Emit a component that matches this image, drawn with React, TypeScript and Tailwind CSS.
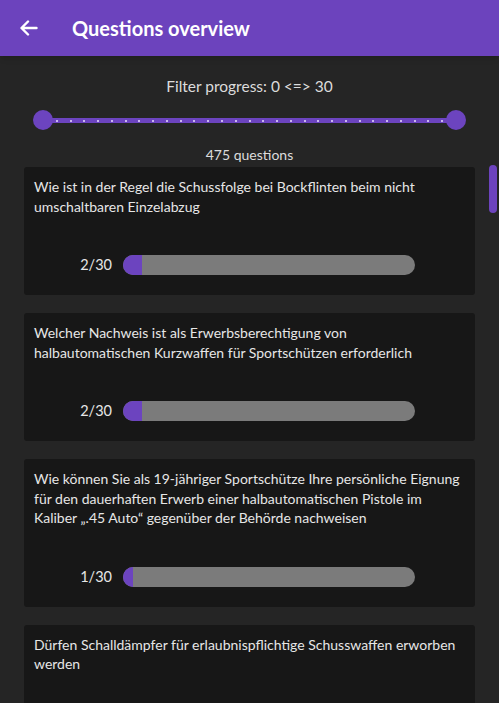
import React from "react";

const questions = [
  {
    text: "Wie ist in der Regel die Schussfolge bei Bockflinten beim nicht umschaltbaren Einzelabzug",
    done: 2,
  },
  {
    text: "Welcher Nachweis ist als Erwerbsberechtigung von halbautomatischen Kurzwaffen für Sportschützen erforderlich",
    done: 2,
  },
  {
    text: "Wie können Sie als 19-jähriger Sportschütze Ihre persönliche Eignung für den dauerhaften Erwerb einer halbautomatischen Pistole im Kaliber „.45 Auto“ gegenüber der Behörde nachweisen",
    done: 1,
  },
  {
    text: "Dürfen Schalldämpfer für erlaubnispflichtige Schusswaffen erworben werden",
    done: 0,
  },
];

const TOTAL = 30;

const RangeSlider = () => {
  const ticks = Array.from({ length: TOTAL - 1 }, (_, i) => i + 1);
  return (
    <div className="relative mx-[33px] h-5">
      {/* track */}
      <div className="absolute left-[10px] right-[10px] top-[8px] h-[5px] bg-[#6c44bf]" />
      {/* ticks */}
      {ticks.map((t) => (
        <div
          key={t}
          className="absolute top-[9.5px] h-[2px] w-[2px] bg-[#c9b6ee]"
          style={{ left: `calc(10px + (100% - 20px) * ${t / TOTAL} - 1px)` }}
        />
      ))}
      <div className="absolute left-0 top-0 h-5 w-5 rounded-full bg-[#6c44bf]" />
      <div className="absolute right-0 top-0 h-5 w-5 rounded-full bg-[#6c44bf]" />
    </div>
  );
};

const QuestionCard = ({ text, done }: { text: string; done: number }) => {
  const pct = (done / TOTAL) * 100;
  return (
    <div className="rounded-[3px] bg-[#171717] px-[10px] pt-[10px] pb-5">
      <p className="text-[14px] leading-[19.5px] text-[#e6e6e6]">{text}</p>
      <div className="mt-[39px] flex h-5 items-center">
        <span className="w-[79px] pr-[1px] text-right text-[14.5px] leading-5 text-[#e6e6e6]">
          {done}/{TOTAL}
        </span>
        <div className="ml-[10px] h-5 w-[292px] overflow-hidden rounded-full bg-[#7b7b7b]">
          <div className="h-full bg-[#6c44bf]" style={{ width: `${pct}%` }} />
        </div>
      </div>
    </div>
  );
};

export default function App() {
  return (
    <div
      className="flex h-[703px] w-[499px] flex-col overflow-hidden bg-[#252525]"
      style={{ fontFamily: 'Lato, "Noto Sans", sans-serif' }}
    >
      {/* Header */}
      <header className="flex h-14 shrink-0 items-center bg-[#6c43bd] pl-5 shadow-md">
        <svg width="18" height="16" viewBox="0 0 18 16" fill="none" stroke="white" strokeWidth="2.4" strokeLinecap="round" strokeLinejoin="round">
          <path d="M16.5 8H2M8 1.5L1.5 8L8 14.5" />
        </svg>
        <h1 className="ml-[34px] text-[20px] font-bold text-white">Questions overview</h1>
      </header>

      {/* Filter */}
      <div className="shrink-0 pt-[19px]">
        <p className="text-center text-[15.5px] text-[#dcdcdc]">Filter progress: 0 &lt;=&gt; 30</p>
        <div className="mt-[12px]">
          <RangeSlider />
        </div>
        <p className="mt-[14px] text-center text-[14px] text-[#dcdcdc]">475 questions</p>
      </div>

      {/* List */}
      <div className="flex min-h-0 flex-1">
        <div className="flex flex-1 flex-col gap-[18px] pl-6 pr-[14px] pt-[2px]">
          {questions.map((q, i) => (
            <QuestionCard key={i} text={q.text} done={q.done} />
          ))}
        </div>
        <div className="w-[10px] shrink-0">
          <div className="h-12 w-2 rounded-full bg-[#6c43bd]" />
        </div>
      </div>
    </div>
  );
}
